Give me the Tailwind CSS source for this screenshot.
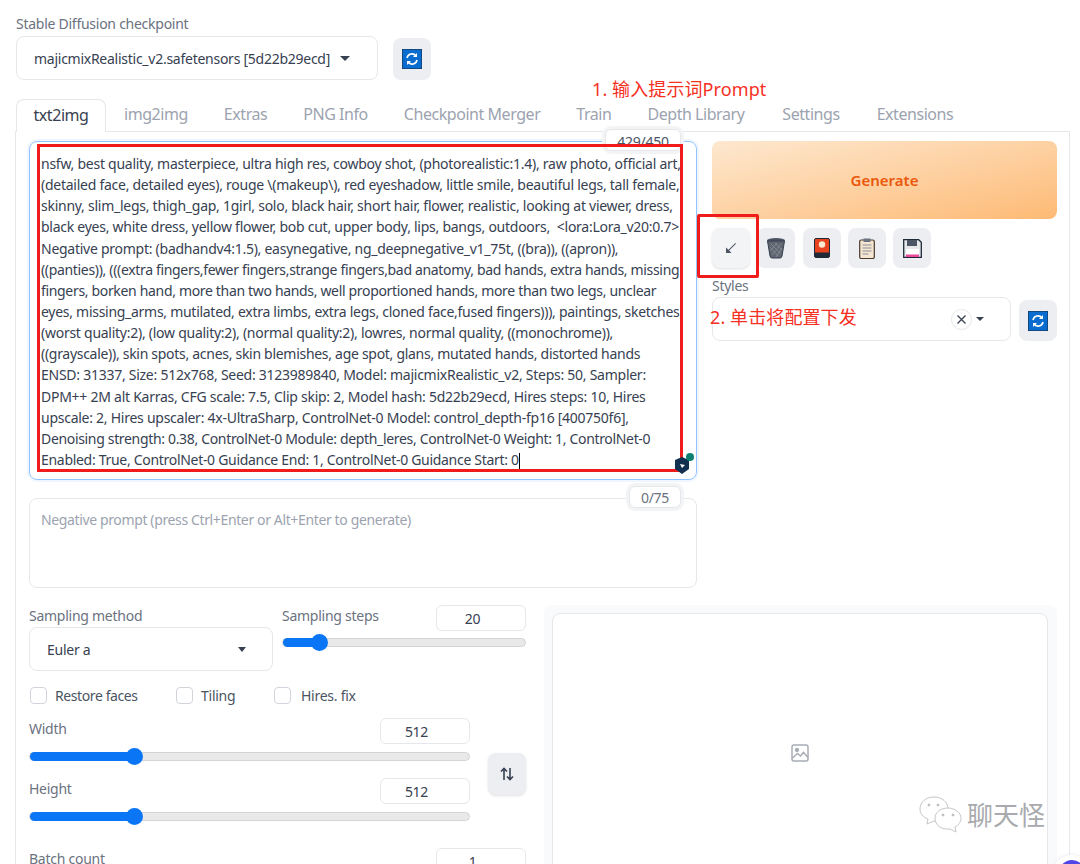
<!DOCTYPE html>
<html lang="en">
<head>
  <meta charset="UTF-8">
  <title>Stable Diffusion</title>
  <script src="https://cdn.jsdelivr.net/npm/@tailwindcss/browser@4"></script>
</head>
<body class="bg-white font-['Noto_Sans','Noto_Sans_CJK_SC',sans-serif] text-[#374151] text-[14px] tracking-[-0.26px]">
<div class="relative w-[1080px] h-[864px] overflow-hidden">
  <div class="px-[16px] pt-[15px]">
    <div class="text-[14px] leading-[18px] text-[#6b7280]">Stable Diffusion checkpoint</div>
    <div class="mt-[3px] flex items-center gap-[15px]">
      <div class="w-[362px] h-[44px] pl-[17px] pr-[27px] flex items-center justify-between border border-[#e5e7eb] rounded-[8px] text-[#374151]">
        <span>majicmixRealistic_v2.safetensors [5d22b29ecd]</span>
        <span class="w-0 h-0 border-x-[5px] border-x-transparent border-t-[5px] border-t-[#374151]"></span>
      </div>
      <div class="w-[38px] h-[42px] mt-[2px] rounded-[8px] bg-[#eceef2] flex items-center justify-center">
        <svg width="20" height="20" viewBox="0 0 20 20"><rect width="20" height="20" fill="#0a6ccf" stroke="#1f2937"/><path d="M5 9a5 5 0 0 1 9-2M15 11a5 5 0 0 1-9 2" fill="none" stroke="#fff" stroke-width="1.6"/><path d="M15 4v4h-4zM5 16v-4h4z" fill="#fff"/></svg>
      </div>
    </div>
    <div class="mt-[19px] flex h-[32px] text-[16px] tracking-[-0.45px] text-[#9ca3af]">
      <div class="w-[90px] h-[33px] pb-[3px] flex items-center justify-center border border-b-0 border-[#e5e7eb] rounded-t-[8px] bg-white text-[#374151] z-10">txt2img</div>
      <div class="px-[18px] pb-[3px] flex items-center">img2img</div>
      <div class="px-[18px] pb-[3px] flex items-center">Extras</div>
      <div class="px-[18px] pb-[3px] flex items-center">PNG Info</div>
      <div class="px-[18px] pb-[3px] flex items-center">Checkpoint Merger</div>
      <div class="px-[18px] pb-[3px] flex items-center">Train</div>
      <div class="px-[18px] pb-[3px] flex items-center">Depth Library</div>
      <div class="ml-[2px] px-[18px] pb-[3px] flex items-center">Settings</div>
      <div class="ml-[1px] px-[18px] pb-[3px] flex items-center">Extensions</div>
    </div>
    <div class="w-[1055px] h-[740px] -ml-px border border-[#e5e7eb] rounded-b-[8px] px-[13px] pt-[9px] flex gap-[15px]">
      <div class="w-[668px] shrink-0">
        <div class="relative h-[339px] border border-[#93c5fd] rounded-[8px] shadow-[0_0_0_2px_#eff6ff] pl-[11px] pt-[11px] text-[14px] leading-[21.14px] whitespace-nowrap">
          nsfw, best quality, masterpiece, ultra high res, cowboy shot, (photorealistic:1.4), raw photo, official art,<br>
          (detailed face, detailed eyes), rouge \(makeup\), red eyeshadow, little smile, beautiful legs, tall female,<br>
          skinny, slim_legs, thigh_gap, 1girl, solo, black hair, short hair, flower, realistic, looking at viewer, dress,<br>
          black eyes, white dress, yellow flower, bob cut, upper body, lips, bangs, outdoors,&nbsp; &lt;lora:Lora_v20:0.7&gt;<br>
          Negative prompt: (badhandv4:1.5), easynegative, ng_deepnegative_v1_75t, ((bra)), ((apron)),<br>
          <span class="tracking-[-0.33px]">((panties)), (((extra fingers,fewer fingers,strange fingers,bad anatomy, bad hands, extra hands, missing</span><br>
          <span class="tracking-[-0.33px]">fingers, borken hand, more than two hands, well proportioned hands, more than two legs, unclear</span><br>
          <span class="tracking-[-0.28px]">eyes, missing_arms, mutilated, extra limbs, extra legs, cloned face,fused fingers))), paintings, sketches,</span><br>
          (worst quality:2), (low quality:2), (normal quality:2), lowres, normal quality, ((monochrome)),<br>
          <span class="tracking-[-0.29px]">((grayscale)), skin spots, acnes, skin blemishes, age spot, glans, mutated hands, distorted hands</span><br>
          ENSD: 31337, Size: 512x768, Seed: 3123989840, Model: majicmixRealistic_v2, Steps: 50, Sampler:<br>
          DPM++ 2M alt Karras, CFG scale: 7.5, Clip skip: 2, Model hash: 5d22b29ecd, Hires steps: 10, Hires<br>
          upscale: 2, Hires upscaler: 4x-UltraSharp, ControlNet-0 Model: control_depth-fp16 [400750f6],<br>
          <span class="tracking-[-0.33px]">Denoising strength: 0.38, ControlNet-0 Module: depth_leres, ControlNet-0 Weight: 1, ControlNet-0</span><br>
          <span class="tracking-[-0.3px]">Enabled: True, ControlNet-0 Guidance End: 1, ControlNet-0 Guidance Start: 0</span><span class="inline-block w-px h-[17px] bg-black align-middle"></span>
          <div class="absolute left-[575px] -top-[13px] w-[76px] h-[22px] bg-white border border-[#e5e7eb] rounded-[6px] shadow-[0_0_0_3px_#f3f4f6] text-center text-[14px] leading-[24px] text-[#4b5563]">429/450</div>
        </div>
        <div class="relative mt-[18px] h-[90px] border border-[#e5e7eb] rounded-[8px] pl-[11px] pt-[10px] text-[14px] leading-[21px] text-[#9ca3af]">
          <span class="tracking-[-0.37px]">Negative prompt (press Ctrl+Enter or Alt+Enter to generate)</span>
          <div class="absolute left-[599px] -top-[13px] w-[52px] h-[22px] bg-white border border-[#e5e7eb] rounded-[6px] shadow-[0_0_0_3px_#f3f4f6] text-center leading-[22px] text-[#6b7280]">0/75</div>
        </div>
        <div class="mt-[17px] flex gap-[18px]">
          <div class="w-[497px] shrink-0">
            <div class="flex gap-[9px]">
              <div class="w-[244px]">
                <div class="h-[22px] leading-[22px] text-[#6b7280]">Sampling method</div>
                <div class="h-[44px] border border-[#e5e7eb] rounded-[8px] pl-[17px] pr-[26px] flex items-center justify-between">
                  <span>Euler a</span>
                  <span class="w-0 h-0 border-x-[4px] border-x-transparent border-t-[5px] border-t-[#374151]"></span>
                </div>
              </div>
              <div class="w-[244px]">
                <div class="flex justify-between items-start">
                  <span class="h-[22px] leading-[22px] text-[#6b7280]">Sampling steps</span>
                  <div class="w-[90px] h-[26px] pr-[17px] border border-[#e5e7eb] rounded-[6px] text-center leading-[26px]">20</div>
                </div>
                <div class="relative mt-[7px] h-[9px] rounded-full bg-[#e9e9e9] border border-[#d4d4d4]">
                  <div class="absolute left-0 -top-px h-[9px] w-[37px] rounded-full bg-[#0a75f5]"></div>
                  <div class="absolute left-[28px] -top-[5px] w-[17px] h-[17px] rounded-full bg-[#0a75f5]"></div>
                </div>
              </div>
            </div>
            <div class="mt-[15px] pl-px flex items-center h-[18px] text-[#4b5563]">
              <span class="w-[17px] h-[17px] border border-[#d1d5db] rounded-[4px]"></span>
              <span class="ml-[8px] w-[121px] tracking-[-0.4px]">Restore faces</span>
              <span class="w-[17px] h-[17px] border border-[#d1d5db] rounded-[4px]"></span>
              <span class="ml-[8px] w-[73px]">Tiling</span>
              <span class="w-[17px] h-[17px] border border-[#d1d5db] rounded-[4px]"></span>
              <span class="ml-[10px]">Hires. fix</span>
            </div>
            <div class="mt-[14px] flex gap-[18px]">
              <div class="w-[441px] shrink-0">
                <div class="flex justify-between">
                  <span class="leading-[22px] text-[#6b7280]">Width</span>
                  <div class="w-[90px] h-[26px] pr-[17px] border border-[#e5e7eb] rounded-[6px] text-center leading-[26px]">512</div>
                </div>
                <div class="relative mt-[8px] h-[9px] rounded-full bg-[#e9e9e9] border border-[#d4d4d4]">
                  <div class="absolute left-0 -top-px h-[9px] w-[104px] rounded-full bg-[#0a75f5]"></div>
                  <div class="absolute left-[96px] -top-[5px] w-[17px] h-[17px] rounded-full bg-[#0a75f5]"></div>
                </div>
                <div class="mt-[17px] flex justify-between">
                  <span class="leading-[22px] text-[#6b7280]">Height</span>
                  <div class="w-[90px] h-[26px] pr-[17px] border border-[#e5e7eb] rounded-[6px] text-center leading-[26px]">512</div>
                </div>
                <div class="relative mt-[8px] h-[9px] rounded-full bg-[#e9e9e9] border border-[#d4d4d4]">
                  <div class="absolute left-0 -top-px h-[9px] w-[104px] rounded-full bg-[#0a75f5]"></div>
                  <div class="absolute left-[96px] -top-[5px] w-[17px] h-[17px] rounded-full bg-[#0a75f5]"></div>
                </div>
              </div>
              <div class="w-[38px] h-[42px] mt-[35px] rounded-[8px] bg-[#eceef2] shadow-sm flex items-center justify-center">
                <svg width="14" height="14" viewBox="0 0 14 14" fill="none" stroke="#374151" stroke-width="1.6"><path d="M4 13V1.5M1 4.5l3-3 3 3M10 1v11.5M7 9.5l3 3 3-3"/></svg>
              </div>
            </div>
            <div class="mt-[27px] flex justify-between">
              <span class="leading-[22px] text-[#6b7280]">Batch count</span>
              <div class="w-[90px] h-[26px] pr-[17px] border border-[#e5e7eb] rounded-[6px] text-center leading-[26px]">1</div>
            </div>
          </div>
          <div class="w-[513px] h-[300px] shrink-0 bg-[#f9fafb] rounded-[8px] p-[8px] pr-[9px]">
            <div class="h-[300px] bg-white border border-[#e5e7eb] rounded-[8px] flex justify-center pt-[130px]">
              <svg width="18" height="18" viewBox="0 0 18 18" fill="none" stroke="#a8adb5" stroke-width="1.5"><rect x="1" y="1" width="16" height="16" rx="2"/><circle cx="6" cy="6" r="1.4" fill="#a8adb5"/><path d="M1.5 14l5-4.5 3 2.5 3-3.5 4.5 5"/></svg>
            </div>
          </div>
        </div>
      </div>
      <div class="w-[345px] shrink-0">
        <div class="h-[78px] rounded-[8px] bg-gradient-to-br from-[#fde8cf] to-[#fdba74] flex items-center justify-center text-[#ea580c] font-semibold text-[15px] tracking-normal">Generate</div>
        <div class="mt-[9px] flex gap-[7.25px]">
          <div class="w-[38px] h-[40px] rounded-[8px] bg-[#f3f4f6] shadow-sm flex items-center justify-center">
            <svg width="12" height="12" viewBox="0 0 12 12" fill="#4b5563"><path d="M11 1.700L10.300 1 3.500 7.800 1 5.500V11h5.500L4.200 8.500z"/></svg>
          </div>
          <div class="w-[38px] h-[40px] rounded-[8px] bg-[#eceef2] flex items-center justify-center">
            <svg width="20" height="22" viewBox="0 0 20 22"><ellipse cx="10" cy="3.5" rx="9" ry="2.5" fill="#4b5563"/><path d="M1.5 4l2.5 15q.3 2 2 2h8q1.7 0 2-2l2.500-15z" fill="#5f666f" stroke="#374151"/><path d="M5 7l10 10M9 6l7 7M4 10l8 9M15 7L6 18M11 6L4 14M16 11l-6 9" stroke="#8d939b" stroke-width=".7"/></svg>
          </div>
          <div class="w-[38px] h-[40px] rounded-[8px] bg-[#eceef2] flex items-center justify-center">
            <svg width="16" height="20" viewBox="0 0 16 20"><rect x=".5" y=".5" width="15" height="19" rx="1.500" fill="#e8431f" stroke="#1f2937"/><circle cx="8" cy="6.500" r="3.200" fill="#fde8d0"/><path d="M1 14.500h14V19H1z" fill="#1f2937"/></svg>
          </div>
          <div class="w-[38px] h-[40px] rounded-[8px] bg-[#eceef2] flex items-center justify-center">
            <svg width="16" height="21" viewBox="0 0 16 21"><rect x=".7" y="2" width="14.600" height="18.500" rx="1.500" fill="#f5e6d3" stroke="#4b3a2a" stroke-width="1.200"/><rect x="4.500" y=".5" width="7" height="3.500" fill="#6b7280"/><path d="M3.500 7h9M3.500 10h9M3.500 13h9M3.500 16h6" stroke="#8b8f96"/></svg>
          </div>
          <div class="w-[38px] h-[40px] rounded-[8px] bg-[#eceef2] flex items-center justify-center">
            <svg width="19" height="19" viewBox="0 0 19 19"><path d="M.7.7h15l2.600 2.600v15H.7z" fill="#e5e7eb" stroke="#1f2937" stroke-width="1.300"/><rect x="4" y="1" width="10" height="6" fill="#4b5563"/><rect x="3" y="10" width="13" height="8" fill="#fff"/><rect x="3" y="15.500" width="13" height="2.500" fill="#ec4899"/></svg>
          </div>
        </div>
        <div class="mt-[9px] leading-[18px] text-[#6b7280]">Styles</div>
        <div class="mt-[2px] flex gap-[8px] items-start">
          <div class="w-[299px] h-[44px] border border-[#e5e7eb] rounded-[8px] flex items-center justify-end pr-[26px] gap-[4px]">
            <span class="w-[21px] h-[21px] rounded-full border border-[#e5e7eb] flex items-center justify-center">
              <svg width="9" height="9" viewBox="0 0 9 9" stroke="#374151" stroke-width="1.300"><path d="M.5.5l8 8M8.500.5l-8 8"/></svg>
            </span>
            <span class="w-0 h-0 border-x-[4px] border-x-transparent border-t-[4px] border-t-[#374151]"></span>
          </div>
          <div class="w-[38px] h-[41px] mt-[3px] rounded-[8px] bg-[#eceef2] flex items-center justify-center">
            <svg width="20" height="20" viewBox="0 0 20 20"><rect width="20" height="20" fill="#0a6ccf" stroke="#1f2937"/><path d="M5 9a5 5 0 0 1 9-2M15 11a5 5 0 0 1-9 2" fill="none" stroke="#fff" stroke-width="1.600"/><path d="M15 4v4h-4zM5 16v-4h4z" fill="#fff"/></svg>
          </div>
        </div>
      </div>
    </div>
  </div>

  <!-- annotations on top of the screenshot -->
  <div class="absolute left-[37px] top-[144px] w-[646px] h-[328px] border-[3px] border-[#f01c1c] pointer-events-none"></div>
  <div class="absolute left-[697px] top-[214px] w-[62px] h-[64px] border-[3px] border-[#f01c1c] rounded-[2px]"></div>
  <div class="absolute left-[592px] top-[77px] text-[18px] leading-[24px] tracking-[0.1px] text-[#f5301f]">1. 输入提示词Prompt</div>
  <div class="absolute left-[710px] top-[305px] text-[18px] leading-[24px] tracking-[0.1px] text-[#f5301f]">2. 单击将配置下发</div>
  <div class="absolute left-[673px] top-[453px]">
    <svg width="24" height="24" viewBox="0 0 24 24"><path d="M9 4l7 3v9l-7 5-7-5V7z" fill="#12304f"/><path d="M7 11l5 1-3 3z" fill="#fff"/><circle cx="17" cy="4" r="4" fill="#0d7f72"/></svg>
  </div>

  <!-- watermark -->
  <div class="absolute left-[918px] top-[795px] flex items-center gap-[3px]">
    <svg width="46" height="40" viewBox="0 0 46 40" fill="#fff" stroke="#c4c6c9" stroke-width="1"><path d="M16 2c8 0 14 5 14 12s-6 12-14 12l-7 3 1-5C5 22 2 19 2 14 2 7 8 2 16 2z"/><path d="M30 13c7 0 13 5 13 10 0 4-3 8-6 9l1 5-6-3c-9 1-15-4-15-11 0-6 6-10 13-10z"/><circle cx="11" cy="10" r="1" fill="#999"/><circle cx="20" cy="10" r="1" fill="#999"/><circle cx="25" cy="20" r="1" fill="#999"/><circle cx="35" cy="20" r="1" fill="#999"/></svg>
    <span class="text-[26px] leading-[30px] tracking-normal text-[#a8aaad]">聊天怪</span>
  </div>
  <div class="absolute left-[1052px] top-[855px] w-[40px] h-[40px] rounded-full bg-white shadow-[0_0_4px_#e5e7eb] flex justify-center pt-[5px]">
    <span class="w-[26px] h-[26px] rounded-full border-[4px] border-[#4f46e5]"></span>
  </div>
</div>
</body>
</html>
